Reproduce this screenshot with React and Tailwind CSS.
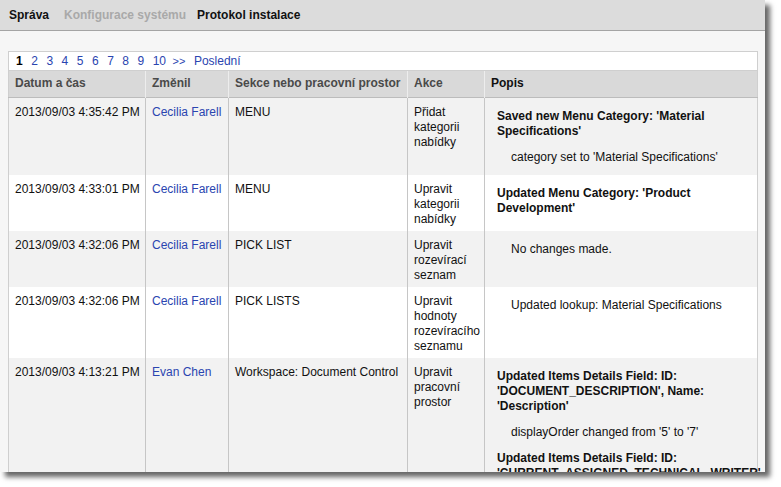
const rows = [
  {
    date: '2013/09/03 4:35:42 PM',
    user: 'Cecilia Farell',
    section: 'MENU',
    action: 'Přidat kategorii nabídky',
    desc: [
      { bold: true, text: "Saved new Menu Category: 'Material Specifications'" },
      { bold: false, text: "category set to 'Material Specifications'" },
    ],
  },
  {
    date: '2013/09/03 4:33:01 PM',
    user: 'Cecilia Farell',
    section: 'MENU',
    action: 'Upravit kategorii nabídky',
    desc: [{ bold: true, text: "Updated Menu Category: 'Product Development'" }],
  },
  {
    date: '2013/09/03 4:32:06 PM',
    user: 'Cecilia Farell',
    section: 'PICK LIST',
    action: 'Upravit rozevírací seznam',
    desc: [{ bold: false, text: 'No changes made.' }],
  },
  {
    date: '2013/09/03 4:32:06 PM',
    user: 'Cecilia Farell',
    section: 'PICK LISTS',
    action: 'Upravit hodnoty rozevíracího seznamu',
    desc: [{ bold: false, text: 'Updated lookup: Material Specifications' }],
  },
  {
    date: '2013/09/03 4:13:21 PM',
    user: 'Evan Chen',
    section: 'Workspace: Document Control',
    action: 'Upravit pracovní prostor',
    desc: [
      { bold: true, text: "Updated Items Details Field: ID: 'DOCUMENT_DESCRIPTION', Name: 'Description'" },
      { bold: false, text: "displayOrder changed from '5' to '7'" },
      { bold: true, text: "Updated Items Details Field: ID: 'CURRENT_ASSIGNED_TECHNICAL_WRITER'" },
    ],
  },
];

const pages = ['2', '3', '4', '5', '6', '7', '8', '9', '10'];

const App = () => {
  return (
    <div className="bg-white w-[781px] h-[487px] font-['Liberation_Sans',Arial,sans-serif] text-[12px] leading-[15px] text-[#111]">
      <div className="w-[765px] h-[472px] overflow-hidden bg-[#f6f6f6] shadow-[5px_5px_5px_rgba(0,0,0,0.6)]">
        <div className="h-[31px] bg-[#dcdcdc] border-b border-[#a4a4a4] flex items-center pl-[9px] font-bold">
          <span className="text-[#111]">Správa</span>
          <span className="ml-[15px] text-[#a9a9a9]">Konfigurace systému</span>
          <span className="ml-[11px] text-[#111]">Protokol instalace</span>
        </div>

        <div className="ml-[8px] mt-[20px] w-[750px]">
          <div className="h-[20px] bg-white border border-[#cfcfcf] flex items-center pl-[7px] gap-[8.5px]">
            <span className="font-bold text-black">1</span>
            {pages.map((p) => (
              <span key={p} className="text-[#2a45b0]">{p}</span>
            ))}
            <span className="text-[#2a45b0] text-[11px] -ml-[2px]">&gt;&gt;</span>
            <span className="text-[#2a45b0]">Poslední</span>
          </div>

          <table className="w-full table-fixed border-collapse border-x border-[#cfcfcf]">
            <colgroup>
              <col className="w-[137px]" />
              <col className="w-[83px]" />
              <col className="w-[179px]" />
              <col className="w-[77px]" />
              <col />
            </colgroup>
            <thead>
              <tr className="h-[26px] bg-[#d9d9d9] border-b border-[#bcbcbc] font-bold text-left">
                <th className="px-[6px] text-[#4a4a4a]">Datum a čas</th>
                <th className="px-[6px] border-l border-[#ededed] text-[#4a4a4a]">Změnil</th>
                <th className="px-[6px] border-l border-[#ededed] text-[#4a4a4a] whitespace-nowrap">Sekce nebo pracovní prostor</th>
                <th className="px-[6px] border-l border-[#ededed] text-[#4a4a4a]">Akce</th>
                <th className="px-[6px] border-l border-[#ededed] text-[#111]">Popis</th>
              </tr>
            </thead>
            <tbody>
              {rows.map((r, i) => (
                <tr key={i} className={i % 2 === 0 ? 'bg-[#f2f2f2]' : 'bg-white'}>
                  <td className="align-top pl-[6px] pr-[4px] pt-[7px] pb-[4px] whitespace-nowrap">{r.date}</td>
                  <td className="align-top pl-[6px] pr-[4px] pt-[7px] pb-[4px] border-l border-[#c6c6c6] whitespace-nowrap text-[#2a45b0]">{r.user}</td>
                  <td className="align-top pl-[6px] pr-[2px] pt-[7px] pb-[4px] border-l border-[#c6c6c6] whitespace-nowrap">{r.section}</td>
                  <td className="align-top pl-[6px] pr-[3px] pt-[7px] pb-[4px] border-l border-[#c6c6c6]">{r.action}</td>
                  <td className="align-top pl-[12px] pr-[8px] pt-[7px] pb-[4px] border-l border-[#c6c6c6]">
                    {r.desc.map((d, j) => (
                      <div
                        key={j}
                        className={`${j === 0 ? 'mt-[4px]' : 'mt-[11px]'} ${j === r.desc.length - 1 ? 'mb-[6px]' : ''} ${d.bold ? 'font-bold' : 'pl-[14px]'}`}
                      >
                        {d.text}
                      </div>
                    ))}
                  </td>
                </tr>
              ))}
            </tbody>
          </table>
        </div>
      </div>
    </div>
  );
};

export default App;
